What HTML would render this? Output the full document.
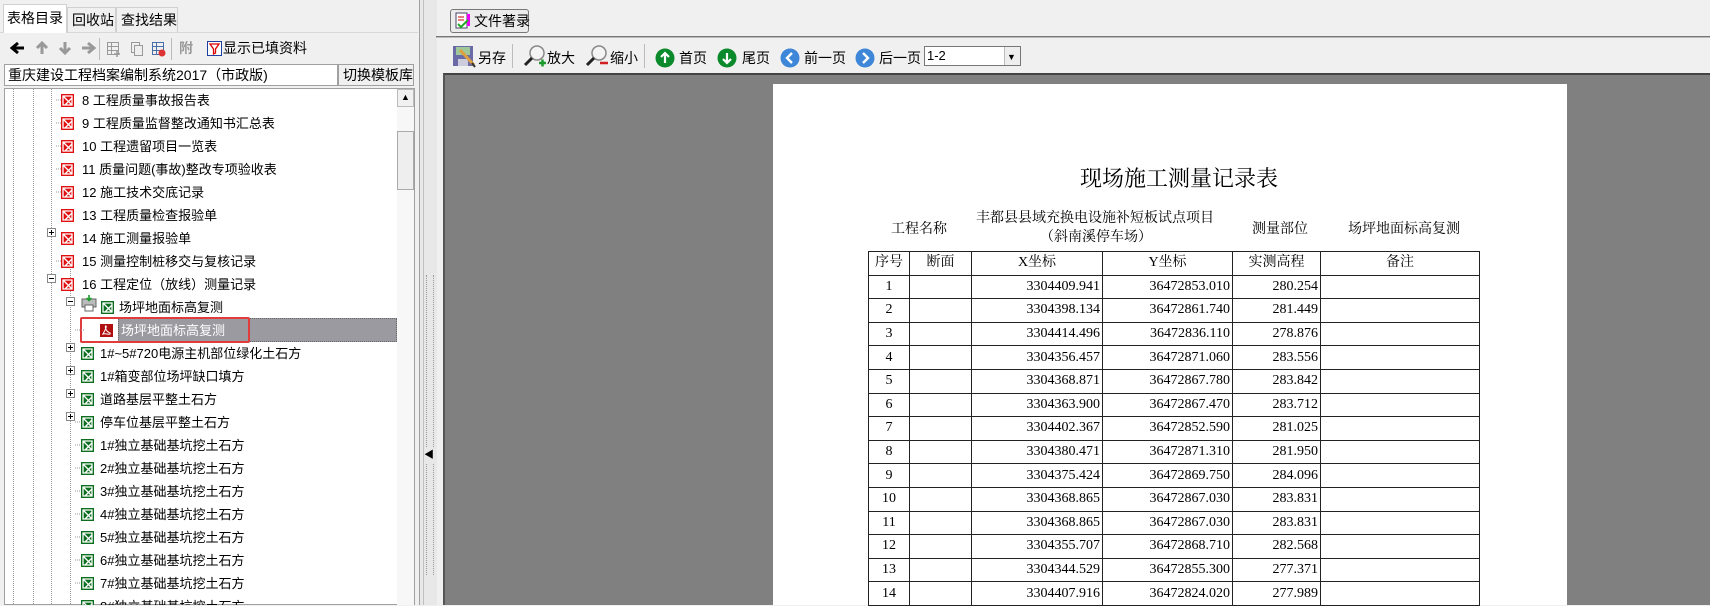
<!DOCTYPE html>
<html><head><meta charset="utf-8"><style>
*{margin:0;padding:0;box-sizing:border-box}
body{width:1710px;height:605px;overflow:hidden;background:#f0f0f0;font-family:"Liberation Sans","Noto Sans CJK SC",sans-serif;font-size:13px;color:#000;position:relative}
.a{position:absolute}
.t{position:absolute;white-space:nowrap;line-height:16px}
.ser{font-family:"Liberation Serif","Noto Serif CJK SC",serif}
table{border-collapse:collapse;position:absolute;left:868px;top:251px;font-family:"Liberation Serif","Noto Serif CJK SC",serif;font-size:14px}
td{border:1.5px solid #222;height:23.6px;padding:0 2px;line-height:18px}
td.r{text-align:right}
td.c{text-align:center}
</style></head><body>

<div class="a" style="left:0;top:0;width:420px;height:605px;background:#f0f0f0;border-right:1px solid #a0a0a0"></div>
<div class="a" style="left:0;top:32px;width:418px;height:1px;background:#d8d8d8"></div>
<div class="a" style="left:3px;top:4px;width:64px;height:29px;background:#fff;border:1px solid #d0d0d0;border-bottom:none"></div>
<div class="t" style="left:7px;top:10px;font-size:14px">表格目录</div>
<div class="a" style="left:67px;top:7px;width:49px;height:25px;border:1px solid #d0d0d0;border-bottom:none;background:#f0f0f0"></div>
<div class="t" style="left:72px;top:12px;font-size:14px">回收站</div>
<div class="a" style="left:116px;top:7px;width:62px;height:25px;border:1px solid #d0d0d0;border-bottom:none;background:#f0f0f0"></div>
<div class="t" style="left:121px;top:12px;font-size:14px">查找结果</div>

<svg class="a" style="left:10px;top:40px" width="90" height="16">
<path d="M2 8h12M8 3L2 8l6 5" stroke="#000" stroke-width="3" fill="none"/>
<path d="M32 14V3M27 8l5-5 5 5" stroke="#999" stroke-width="3" fill="none"/>
<path d="M55 2v11M50 8l5 5 5-5" stroke="#999" stroke-width="3" fill="none"/>
<path d="M72 8h12M78 3l6 5-6 5" stroke="#999" stroke-width="3" fill="none"/>
</svg>
<div class="a" style="left:99px;top:38px;width:1px;height:22px;background:#bbb"></div>
<svg class="a" style="left:106px;top:41px" width="60" height="16"><g fill="none" stroke="#999"><rect x="1.5" y="1.5" width="11" height="12"/><path d="M1.5 5.5h11M1.5 9.5h11M5.5 1.5v12"/><rect x="25.5" y="1.5" width="8" height="10"/><rect x="28.5" y="4.5" width="8" height="10" fill="#eee"/></g><g fill="none" stroke="#4a6ea8"><rect x="46.5" y="1.5" width="11" height="12"/><path d="M46.5 5.5h11M46.5 9.5h11M50.5 1.5v12"/></g><circle cx="56" cy="12" r="3.5" fill="#d33"/><path d="M8 13h6M11 10v6" stroke="#999" stroke-width="1.5"/></svg>
<div class="a" style="left:171px;top:38px;width:1px;height:22px;background:#bbb"></div>
<div class="t" style="left:179px;top:40px;font-size:14px;color:#999;font-weight:bold">附</div>
<svg class="a" style="left:207px;top:41px" width="15" height="15"><rect x="0.5" y="0.5" width="14" height="14" fill="#fff" stroke="#2040a0"/><path d="M3 3h9L8.5 8v4l-2 1V8z" fill="none" stroke="#d00" stroke-width="1.3"/></svg>
<div class="t" style="left:223px;top:40px;font-size:14px">显示已填资料</div>

<div class="a" style="left:4px;top:64px;width:334px;height:22px;background:#fff;border:1px solid #a0a0a0"></div>
<div class="t" style="left:8px;top:67px;font-size:14px">重庆建设工程档案编制系统2017（市政版)</div>
<div class="a" style="left:338px;top:64px;width:76px;height:22px;background:#f0f0f0;border:1px solid #a0a0a0"></div>
<div class="t" style="left:343px;top:67px;font-size:14px">切换模板库</div>

<div class="a" style="left:4px;top:88px;width:411px;height:517px;background:#fff;border:1px solid #a0a0a0"></div>
<div class="a" style="left:397px;top:89px;width:17px;height:516px;background:#f7f7f7"></div>
<div class="a" style="left:397px;top:89px;width:17px;height:18px;background:#f0f0f0;border:1px solid #bbb"></div>
<div class="t" style="left:401px;top:89px;font-size:9px">&#x25B2;</div>
<div class="a" style="left:397px;top:131px;width:17px;height:59px;background:#eee;border:1px solid #aaa"></div>
<svg class="a" style="left:5px;top:89px" width="392" height="516"><g stroke="#999" stroke-dasharray="1,1"><path d="M8.5 0v516M28.5 0v516M46.5 0v516"/><path d="M65.5 180v336"/></g></svg>
<div class="a" style="left:118px;top:318px;width:279px;height:24px;background:#9a9aa0;border:1px dotted #666"></div>
<div class="a" style="left:80px;top:317px;width:170px;height:26px;border:2px solid #e03c3c;border-radius:2px"></div>

<div class="a" style="left:420px;top:0;width:17px;height:605px;background:#e8e8e8"></div>
<div class="a" style="left:423px;top:0;width:1px;height:605px;background:#c0c0c0"></div>
<div class="a" style="left:426px;top:275px;width:8px;height:300px;border-left:1px dotted #999;border-right:1px dotted #999"></div>
<div class="t" style="left:424px;top:448px;font-size:10px;background:#e8e8e8">&#x25C0;</div>

<div class="a" style="left:437px;top:0;width:1273px;height:605px;background:#f0f0f0"></div>
<div class="a" style="left:450px;top:9px;width:79px;height:24px;border:1px solid #777;border-radius:3px;background:#ececec"></div>
<svg class="a" style="left:454px;top:12px" width="18" height="18"><rect x="2" y="1" width="11" height="15" fill="#fff" stroke="#446"/><path d="M4 5h6M4 8h6" stroke="#c00"/><rect x="13" y="2" width="3" height="12" fill="#e0f"/><path d="M4 12l3 3 7-7" stroke="#2a2" stroke-width="2" fill="none"/></svg>
<div class="t" style="left:474px;top:13px;font-size:14px">文件著录</div>
<div class="a" style="left:436px;top:36px;width:1274px;height:2px;border-top:1px solid #777;border-bottom:1px solid #bbb"></div>

<svg class="a" style="left:452px;top:45px" width="24" height="24"><rect x="1" y="1" width="20" height="20" fill="#6a6aa6"/><rect x="4" y="2" width="14" height="8" fill="#9ec89a"/><rect x="6" y="14" width="10" height="7" fill="#ccd"/><path d="M8 5l14 15" stroke="#e0a040" stroke-width="3"/><path d="M20 18l3 4" stroke="#333" stroke-width="2"/></svg>
<div class="t" style="left:478px;top:50px;font-size:14px">另存</div>
<div class="a" style="left:512px;top:44px;width:1px;height:24px;background:#bbb"></div>
<svg class="a" style="left:523px;top:44px" width="24" height="24"><circle cx="14" cy="9" r="7" fill="#f4f4f4" stroke="#888" stroke-width="1.5"/><path d="M9 14l-7 7" stroke="#222" stroke-width="3"/><path d="M16 19h7M19.5 15.5v7" stroke="#1a9a2a" stroke-width="2.5"/></svg>
<div class="t" style="left:547px;top:50px;font-size:14px">放大</div>
<svg class="a" style="left:585px;top:44px" width="24" height="24"><circle cx="14" cy="9" r="7" fill="#f4f4f4" stroke="#888" stroke-width="1.5"/><path d="M9 14l-7 7" stroke="#222" stroke-width="3"/><path d="M15 19h8" stroke="#d02020" stroke-width="2.5"/></svg>
<div class="t" style="left:610px;top:50px;font-size:14px">缩小</div>
<div class="a" style="left:644px;top:44px;width:1px;height:24px;background:#bbb"></div>
<svg class="a" style="left:655px;top:48px" width="20" height="20"><circle cx="10" cy="10" r="9.5" fill="#0a8a2a"/><path d="M10 15V5M6 9l4-4 4 4" stroke="#fff" stroke-width="2.2" fill="none"/></svg>
<div class="t" style="left:679px;top:50px;font-size:14px">首页</div>
<svg class="a" style="left:717px;top:48px" width="20" height="20"><circle cx="10" cy="10" r="9.5" fill="#0a8a2a"/><path d="M10 5v10M6 11l4 4 4-4" stroke="#fff" stroke-width="2.2" fill="none"/></svg>
<div class="t" style="left:742px;top:50px;font-size:14px">尾页</div>
<svg class="a" style="left:780px;top:48px" width="20" height="20"><circle cx="10" cy="10" r="9.5" fill="#3d86d8"/><path d="M12 5l-5 5 5 5" stroke="#fff" stroke-width="2.4" fill="none"/></svg>
<div class="t" style="left:804px;top:50px;font-size:14px">前一页</div>
<svg class="a" style="left:855px;top:48px" width="20" height="20"><circle cx="10" cy="10" r="9.5" fill="#3d86d8"/><path d="M8 5l5 5-5 5" stroke="#fff" stroke-width="2.4" fill="none"/></svg>
<div class="t" style="left:879px;top:50px;font-size:14px">后一页</div>
<div class="a" style="left:924px;top:46px;width:97px;height:20px;background:#fff;border:1px solid #777"></div>
<div class="t" style="left:927px;top:48px;font-size:13px">1-2</div>
<div class="a" style="left:1004px;top:47px;width:16px;height:18px;background:#eee;border-left:1px solid #bbb"></div>
<div class="t" style="left:1007px;top:49px;font-size:9px">&#x25BC;</div>

<div class="a" style="left:443px;top:73px;width:1267px;height:532px;background:#808080;border-top:2px solid #444;border-left:2px solid #555"></div>
<div class="a" style="left:773px;top:84px;width:794px;height:521px;background:#fff;overflow:hidden"></div>
<div class="t ser" style="left:1080px;top:165px;font-size:22px;line-height:28px">现场施工测量记录表</div>
<div class="t ser" style="left:891px;top:222px;font-size:14px">工程名称</div>
<div class="t ser" style="left:976px;top:211px;font-size:14px">丰都县县域充换电设施补短板试点项目</div>
<div class="t ser" style="left:1040px;top:230px;font-size:14px">（斜南溪停车场）</div>
<div class="t ser" style="left:1252px;top:222px;font-size:14px">测量部位</div>
<div class="t ser" style="left:1348px;top:222px;font-size:14px">场坪地面标高复测</div>

<table>
<colgroup><col style="width:41px"><col style="width:62px"><col style="width:131px"><col style="width:130px"><col style="width:88px"><col style="width:159px"></colgroup>
<tr><td class="c">序号</td><td class="c">断面</td><td class="c">X坐标</td><td class="c">Y坐标</td><td class="c">实测高程</td><td class="c">备注</td></tr>
<tr><td class="c">1</td><td></td><td class="r">3304409.941</td><td class="r">36472853.010</td><td class="r">280.254</td><td></td></tr>
<tr><td class="c">2</td><td></td><td class="r">3304398.134</td><td class="r">36472861.740</td><td class="r">281.449</td><td></td></tr>
<tr><td class="c">3</td><td></td><td class="r">3304414.496</td><td class="r">36472836.110</td><td class="r">278.876</td><td></td></tr>
<tr><td class="c">4</td><td></td><td class="r">3304356.457</td><td class="r">36472871.060</td><td class="r">283.556</td><td></td></tr>
<tr><td class="c">5</td><td></td><td class="r">3304368.871</td><td class="r">36472867.780</td><td class="r">283.842</td><td></td></tr>
<tr><td class="c">6</td><td></td><td class="r">3304363.900</td><td class="r">36472867.470</td><td class="r">283.712</td><td></td></tr>
<tr><td class="c">7</td><td></td><td class="r">3304402.367</td><td class="r">36472852.590</td><td class="r">281.025</td><td></td></tr>
<tr><td class="c">8</td><td></td><td class="r">3304380.471</td><td class="r">36472871.310</td><td class="r">281.950</td><td></td></tr>
<tr><td class="c">9</td><td></td><td class="r">3304375.424</td><td class="r">36472869.750</td><td class="r">284.096</td><td></td></tr>
<tr><td class="c">10</td><td></td><td class="r">3304368.865</td><td class="r">36472867.030</td><td class="r">283.831</td><td></td></tr>
<tr><td class="c">11</td><td></td><td class="r">3304368.865</td><td class="r">36472867.030</td><td class="r">283.831</td><td></td></tr>
<tr><td class="c">12</td><td></td><td class="r">3304355.707</td><td class="r">36472868.710</td><td class="r">282.568</td><td></td></tr>
<tr><td class="c">13</td><td></td><td class="r">3304344.529</td><td class="r">36472855.300</td><td class="r">277.371</td><td></td></tr>
<tr><td class="c">14</td><td></td><td class="r">3304407.916</td><td class="r">36472824.020</td><td class="r">277.989</td><td></td></tr>
</table>

<svg class="a" style="left:0;top:0" width="400" height="605" font-family="Liberation Sans, Noto Sans CJK SC, sans-serif" font-size="13">
<defs>
<g id="rx"><rect x="0" y="0" width="13" height="13" fill="#e01010"/><path d="M2 2h9v9H2zM2 2l9 9M4 11l7-7" stroke="#fff" stroke-width="1.3" fill="none"/></g>
<g id="gx"><rect x="0" y="0" width="13" height="13" fill="#0b6e1e"/><path d="M2 2h9v9H2zM2 2l9 9M4 11l7-7" stroke="#fff" stroke-width="1.3" fill="none"/></g>
<g id="pl"><rect x="0.5" y="0.5" width="8" height="8" fill="#fff" stroke="#888"/><path d="M2 4.5h5M4.5 2v5" stroke="#000"/></g>
<g id="mi"><rect x="0.5" y="0.5" width="8" height="8" fill="#fff" stroke="#888"/><path d="M2 4.5h5" stroke="#000"/></g>
</defs>
<g stroke="#999" stroke-dasharray="1,1"><path d="M56 100h6M56 123h6M56 146h6M56 169h6M56 192h6M56 261h6M75 330h10M75 514h7M75 537h7M75 422h7M75 445h7M75 468h7M75 491h7M75 560h7M75 583h7"/></g>
<use href="#rx" x="61" y="94"/><text x="82" y="105">8 工程质量事故报告表</text>
<use href="#rx" x="61" y="117"/><text x="82" y="128">9 工程质量监督整改通知书汇总表</text>
<use href="#rx" x="61" y="140"/><text x="82" y="151">10 工程遗留项目一览表</text>
<use href="#rx" x="61" y="163"/><text x="82" y="174">11 质量问题(事故)整改专项验收表</text>
<use href="#rx" x="61" y="186"/><text x="82" y="197">12 施工技术交底记录</text>
<use href="#rx" x="61" y="209"/><text x="82" y="220">13 工程质量检查报验单</text>
<use href="#pl" x="47" y="228"/><use href="#rx" x="61" y="232"/><text x="82" y="243">14 施工测量报验单</text>
<use href="#rx" x="61" y="255"/><text x="82" y="266">15 测量控制桩移交与复核记录</text>
<use href="#mi" x="47" y="274"/><use href="#rx" x="61" y="278"/><text x="82" y="289">16 工程定位（放线）测量记录</text>
<use href="#mi" x="66" y="297"/>
<g transform="translate(80,295)"><rect x="2" y="4" width="14" height="8" fill="#bbb" stroke="#666"/><rect x="5" y="10" width="8" height="6" fill="#fff" stroke="#666"/><path d="M9 0v5M6.5 3l2.5 2.5 2.5-2.5" stroke="#1a9a2a" stroke-width="1.6" fill="none"/></g>
<use href="#gx" x="101" y="301"/><text x="119" y="312">场坪地面标高复测</text>
<g transform="translate(100,324)"><rect width="13" height="13" fill="#b01010"/><path d="M3 10c2-4 4-7 3-8s-1 3 1 5 4 2 3 3-5-1-7 0z" stroke="#fff" fill="none"/></g>
<text x="121" y="335" fill="#fff">场坪地面标高复测</text>
<use href="#pl" x="66" y="343"/><use href="#gx" x="81" y="347"/><text x="100" y="358">1#~5#720电源主机部位绿化土石方</text>
<use href="#pl" x="66" y="366"/><use href="#gx" x="81" y="370"/><text x="100" y="381">1#箱变部位场坪缺口填方</text>
<use href="#pl" x="66" y="389"/><use href="#gx" x="81" y="393"/><text x="100" y="404">道路基层平整土石方</text>
<use href="#pl" x="66" y="412"/><use href="#gx" x="81" y="416"/><text x="100" y="427">停车位基层平整土石方</text>
<use href="#gx" x="81" y="439"/><text x="100" y="450">1#独立基础基坑挖土石方</text>
<use href="#gx" x="81" y="462"/><text x="100" y="473">2#独立基础基坑挖土石方</text>
<use href="#gx" x="81" y="485"/><text x="100" y="496">3#独立基础基坑挖土石方</text>
<use href="#gx" x="81" y="508"/><text x="100" y="519">4#独立基础基坑挖土石方</text>
<use href="#gx" x="81" y="531"/><text x="100" y="542">5#独立基础基坑挖土石方</text>
<use href="#gx" x="81" y="554"/><text x="100" y="565">6#独立基础基坑挖土石方</text>
<use href="#gx" x="81" y="577"/><text x="100" y="588">7#独立基础基坑挖土石方</text>
<use href="#gx" x="81" y="600"/><text x="100" y="611">8#独立基础基坑挖土石方</text>
</svg>
</body></html>
